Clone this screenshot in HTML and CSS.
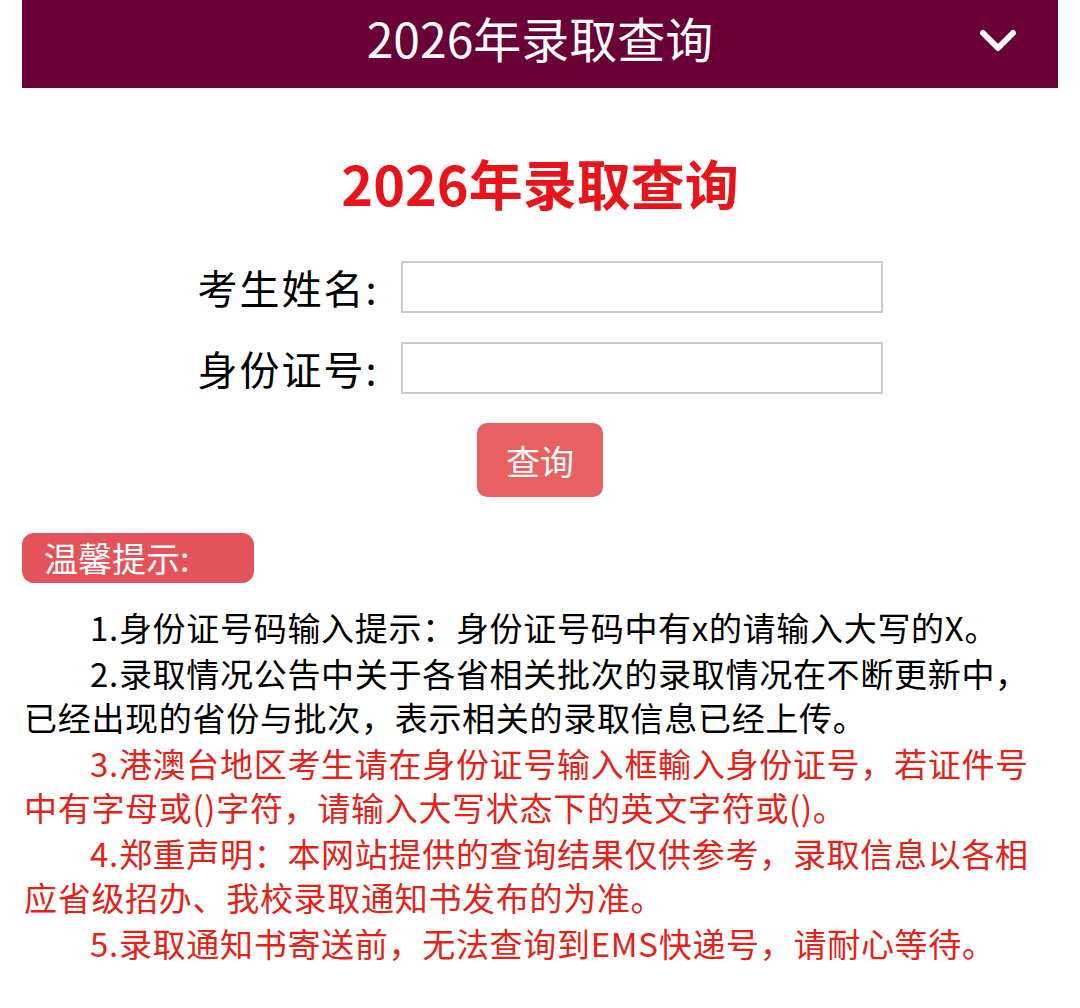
FILE: index.html
```html
<!DOCTYPE html>
<html lang="zh-CN">
<head>
  <meta charset="UTF-8" />
  <meta name="viewport" content="width=device-width, initial-scale=1.0"/>
  <title>2026年录取查询</title>
  <link rel="stylesheet" href="styles.css">
</head>
<body>

  <!-- Top bar -->
  <div class="topbar">
    <span class="topbar-title">2026年录取查询</span>
    <svg class="topbar-arrow" viewBox="0 0 40 28" width="40" height="28">
      <polyline points="5,6 20,21 35,6" fill="none" stroke="#fff" stroke-width="6" stroke-linecap="round" stroke-linejoin="round"/>
    </svg>
  </div>

  <!-- Query form -->
  <div class="query">
    <h1>2026年录取查询</h1>
    <form class="query-form" id="queryForm">
      <label for="name">考生姓名:</label>
      <input type="text" id="name" />
      <label for="idcard">身份证号:</label>
      <input type="text" id="idcard" />
      <div class="form-btn">
        <button type="submit">查询</button>
      </div>
    </form>
  </div>

  <!-- Tips -->
  <div class="tips">
    <div class="tips-title">温馨提示:</div>
    <p>1.身份证号码输入提示：身份证号码中有x的请输入大写的X。</p>
    <p>2.录取情况公告中关于各省相关批次的录取情况在不断更新中，已经出现的省份与批次，表示相关的录取信息已经上传。</p>
    <p class="red">3.港澳台地区考生请在身份证号输入框輸入身份证号，若证件号中有字母或()字符，请输入大写状态下的英文字符或()。</p>
    <p class="red">4.郑重声明：本网站提供的查询结果仅供参考，录取信息以各相应省级招办、我校录取通知书发布的为准。</p>
    <p class="red">5.录取通知书寄送前，无法查询到EMS快递号，请耐心等待。</p>
  </div>

  <script>
    document.getElementById('queryForm').addEventListener('submit', function (e) {
      e.preventDefault();
    });
  </script>
</body>
</html>
```

FILE: styles.css
```css
body {
  font-family: "Noto Sans CJK SC", "Noto Sans", sans-serif;
  margin: 0;
  padding: 0 22px;
  background-color: #fff;
  color: #000;
}

.topbar {
  position: relative;
  height: 88px;
  background-color: #690036;
  display: flex;
  align-items: center;
  justify-content: center;
}

.topbar-title {
  color: #fff;
  font-size: 48px;
  line-height: 1;
  margin-top: -14px;
}

.topbar-arrow {
  position: absolute;
  right: 40px;
  top: 27px;
}

.query {
  text-align: center;
}

.query h1 {
  color: #e8141a;
  font-size: 54px;
  font-weight: bold;
  margin: 0;
  padding-top: 60px;
  line-height: 70px;
}

.query-form {
  display: grid;
  grid-template-columns: auto 482px;
  justify-content: center;
  align-items: center;
  column-gap: 22px;
  row-gap: 29px;
  margin-top: 43px;
}

.query-form label {
  font-size: 40px;
  line-height: 52px;
  letter-spacing: 2px;
  text-align: right;
}

.query-form input {
  width: 482px;
  height: 52px;
  box-sizing: border-box;
  border: 2px solid #ccc;
  font-size: 28px;
  padding: 0 10px;
  outline: none;
}

.form-btn {
  grid-column: 1 / 3;
  display: flex;
  justify-content: center;
}

.form-btn button {
  background-color: #e86060;
  color: #fff;
  border: none;
  width: 126px;
  height: 74px;
  border-radius: 10px;
  font-family: inherit;
  font-size: 34px;
  cursor: pointer;
}

.tips {
  margin-top: 36px;
  padding-right: 20px;
}

.tips-title {
  display: inline-block;
  width: 232px;
  height: 50px;
  box-sizing: border-box;
  padding-left: 22px;
  background-color: #e5535a;
  color: #fff;
  border-radius: 12px;
  font-size: 34px;
  line-height: 50px;
}

.tips p {
  margin: 2px 0 0;
  padding-left: 2px;
  font-size: 33px;
  letter-spacing: 0.7px;
  line-height: 44px;
  text-indent: 2em;
}

.tips p:first-of-type {
  margin-top: 22px;
}

.tips .red {
  color: #e2231a;
}
```
